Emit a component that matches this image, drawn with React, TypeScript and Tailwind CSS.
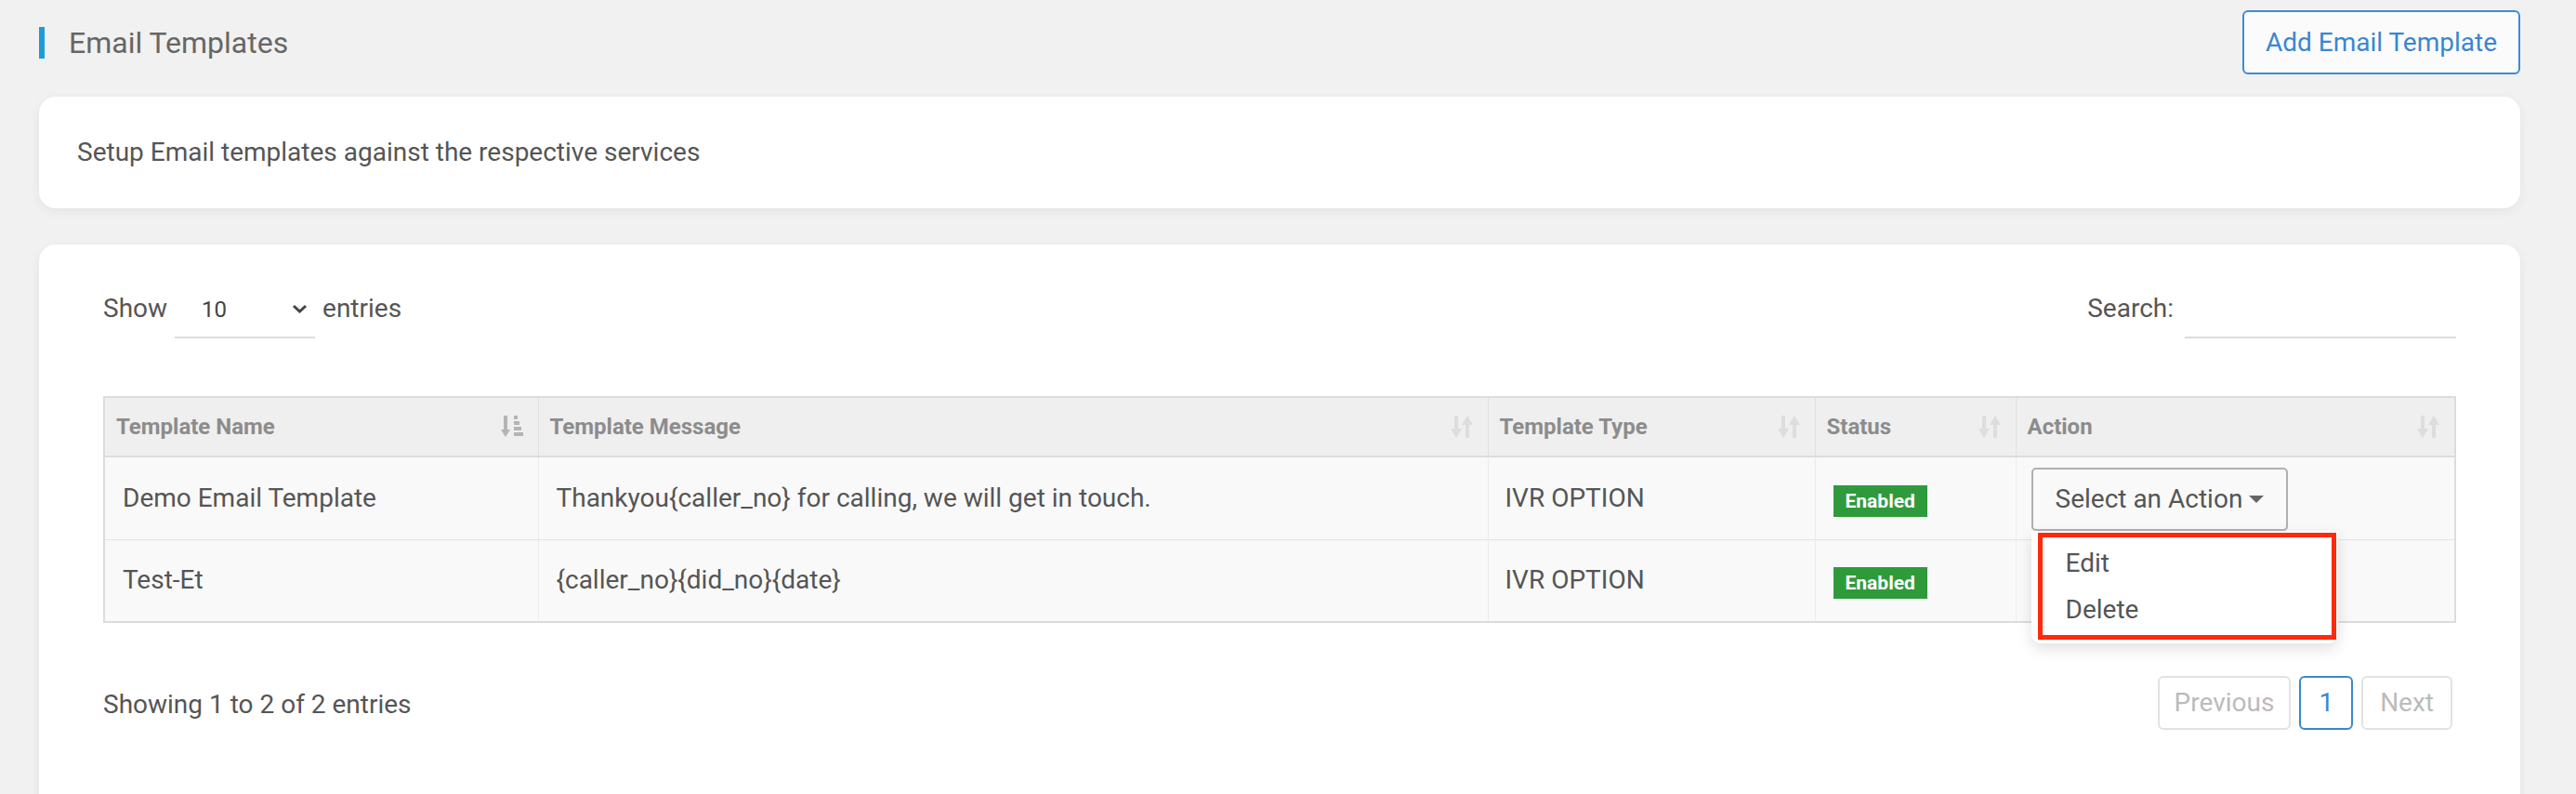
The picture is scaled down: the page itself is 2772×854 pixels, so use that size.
import React from "react";

interface TemplateRow {
  id: number;
  name: string;
  message: string;
  type: string;
  enabled: boolean;
}

const rows: TemplateRow[] = [
  {
    id: 1,
    name: "Demo Email Template",
    message: "Thankyou{caller_no} for calling, we will get in touch.",
    type: "IVR OPTION",
    enabled: true,
  },
  {
    id: 2,
    name: "Test-Et",
    message: "{caller_no}{did_no}{date}",
    type: "IVR OPTION",
    enabled: true,
  },
];

const columns = [
  { label: "Template Name", width: "w-[467px]", sorted: true },
  { label: "Template Message", width: "w-[1022px]", sorted: false },
  { label: "Template Type", width: "w-[352px]", sorted: false },
  { label: "Status", width: "w-[216px]", sorted: false },
  { label: "Action", width: "", sorted: false },
];

const SortIcon = ({ sorted }: { sorted: boolean }) =>
  sorted ? (
    <svg width="24" height="26" viewBox="0 0 24 26" className="shrink-0">
      <g fill="#b4b4b4">
        <rect x="3" y="1" width="4" height="17" />
        <polygon points="0,16 10,16 5,24" />
        <rect x="14" y="1" width="4" height="4" />
        <rect x="14" y="7" width="6" height="4" />
        <rect x="14" y="13" width="8" height="4" />
        <rect x="14" y="19" width="10" height="4" />
      </g>
    </svg>
  ) : (
    <svg width="24" height="26" viewBox="0 0 24 26" className="shrink-0">
      <g fill="#dddddd">
        <rect x="4" y="1" width="4" height="16" />
        <polygon points="0,15 12,15 6,25" />
        <polygon points="12,11 24,11 18,1" />
        <rect x="16" y="9" width="4" height="16" />
      </g>
    </svg>
  );

const ActionButton = () => (
  <div className="relative inline-block mt-[3px]">
    <button className="flex items-center h-[68px] pl-[24px] pr-[24px] border-2 border-[#b0b0b0] rounded-[5px] bg-[#f9f9f9] text-[28px] text-[#555] shadow-[0_1px_1px_rgba(0,0,0,0.08)]">
      Select an Action
      <svg width="16" height="9" viewBox="0 0 16 9" className="ml-[7px]">
        <polygon points="0,0 16,0 8,8" fill="#666" />
      </svg>
    </button>
    {/* open dropdown */}
    <div className="absolute left-0 top-full z-10 w-[330px] h-[121px] pl-[7px] pr-[2px] pt-[2px] bg-white rounded-b-[10px] shadow-[0_6px_16px_rgba(0,0,0,0.12)]">
      <div className="h-[115px] border-[5px] border-[#ff2a0a] pt-[3px]">
        <div className="h-[50px] flex items-center px-[25px] text-[28px] text-[#555]">
          Edit
        </div>
        <div className="h-[50px] flex items-center px-[25px] text-[28px] text-[#555]">
          Delete
        </div>
      </div>
    </div>
  </div>
);

export default function App() {
  return (
    <div className="w-full h-[854px] overflow-hidden bg-[#f1f1f1] font-['Roboto',sans-serif] pl-[42px] pr-[60px] pt-[11px]">
      <div className="flex items-center justify-between h-[69px]">
        <div className="flex items-center">
          <div className="w-[6px] h-[34px] bg-[#1d9bd7]" />
          <h1 className="ml-[26px] text-[32px] text-[#666]">Email Templates</h1>
        </div>
        <button className="h-[69px] px-[23px] border-2 border-[#3d8bd6] rounded-[6px] bg-[#fbfbfb] text-[28px] text-[#3a86d0]">
          Add Email Template
        </button>
      </div>

      <div className="mt-[24px] h-[120px] flex items-center px-[41px] bg-white rounded-[18px] shadow-[0_3px_12px_rgba(0,0,0,0.06)]">
        <p className="text-[28px] text-[#555]">
          Setup Email templates against the respective services
        </p>
      </div>

      <div className="mt-[39px] h-[640px] bg-white rounded-[18px] shadow-[0_3px_12px_rgba(0,0,0,0.06)] px-[69px] pt-[37px]">
        <div className="flex items-center justify-between h-[64px]">
          <div className="flex items-center text-[28px] text-[#555]">
            <span>Show</span>
            <div className="ml-[8px] w-[151px] h-[64px] border-b-2 border-[#dddddd] flex items-center pl-[29px] pr-[8px]">
              <span className="text-[24px] text-[#444] mt-[4px]">10</span>
              <svg width="17" height="10" viewBox="0 0 17 10" className="ml-auto mt-[2px]">
                <polyline points="2,2 8.5,8 15,2" fill="none" stroke="#444" strokeWidth="3" />
              </svg>
            </div>
            <span className="ml-[8px]">entries</span>
          </div>
          <div className="flex items-center text-[28px] text-[#555]">
            <span>Search:</span>
            <div className="ml-[12px] w-[292px] h-[64px] border-b-2 border-[#dddddd]" />
          </div>
        </div>

        <table className="mt-[62px] w-full table-fixed border-collapse border-2 border-[#dcdcdc]">
          <thead>
            <tr className="bg-[#efefef] border-b-2 border-[#dcdcdc]">
              {columns.map((col) => (
                <th
                  key={col.label}
                  className={`${col.width} h-[64px] pl-[12px] pr-[16px] border-r border-[#e0e0e0] text-left font-bold text-[24px] text-[#8c8c8c]`}
                >
                  <div className="flex items-center justify-between">
                    <span>{col.label}</span>
                    <SortIcon sorted={col.sorted} />
                  </div>
                </th>
              ))}
            </tr>
          </thead>
          <tbody>
            {rows.map((row, i) => (
              <tr key={row.id} className="bg-[#f9f9f9] border-b border-[#e4e4e4]">
                <td className="h-[89px] px-[19px] border-r border-[#ececec] text-[28px] text-[#555]">
                  {row.name}
                </td>
                <td className="px-[19px] border-r border-[#ececec] text-[28px] text-[#555]">
                  {row.message}
                </td>
                <td className="px-[18px] border-r border-[#ececec] text-[28px] text-[#555]">
                  {row.type}
                </td>
                <td className="px-[19px] border-r border-[#ececec]">
                  {row.enabled && (
                    <span className="inline-block px-[13px] py-[3px] mt-[6px] bg-[#2f9a3b] text-white font-bold text-[21px] leading-[28px]">
                      Enabled
                    </span>
                  )}
                </td>
                <td className="pl-[16px]">{i === 0 && <ActionButton />}</td>
              </tr>
            ))}
          </tbody>
        </table>

        <div className="mt-[57px] flex items-center justify-between pr-[4px]">
          <span className="text-[28px] text-[#555] mt-[3px]">Showing 1 to 2 of 2 entries</span>
          <div className="flex items-center gap-[9px] text-[28px]">
            <span className="h-[58px] flex items-center px-[16px] border-2 border-[#e2e2e2] rounded-[6px] text-[#bbbbbb]">
              Previous
            </span>
            <span className="h-[58px] flex items-center px-[19px] border-2 border-[#3a87d0] rounded-[6px] text-[#3a87d0]">
              1
            </span>
            <span className="h-[58px] flex items-center px-[18px] border-2 border-[#e2e2e2] rounded-[6px] text-[#bbbbbb]">
              Next
            </span>
          </div>
        </div>
      </div>
    </div>
  );
}
